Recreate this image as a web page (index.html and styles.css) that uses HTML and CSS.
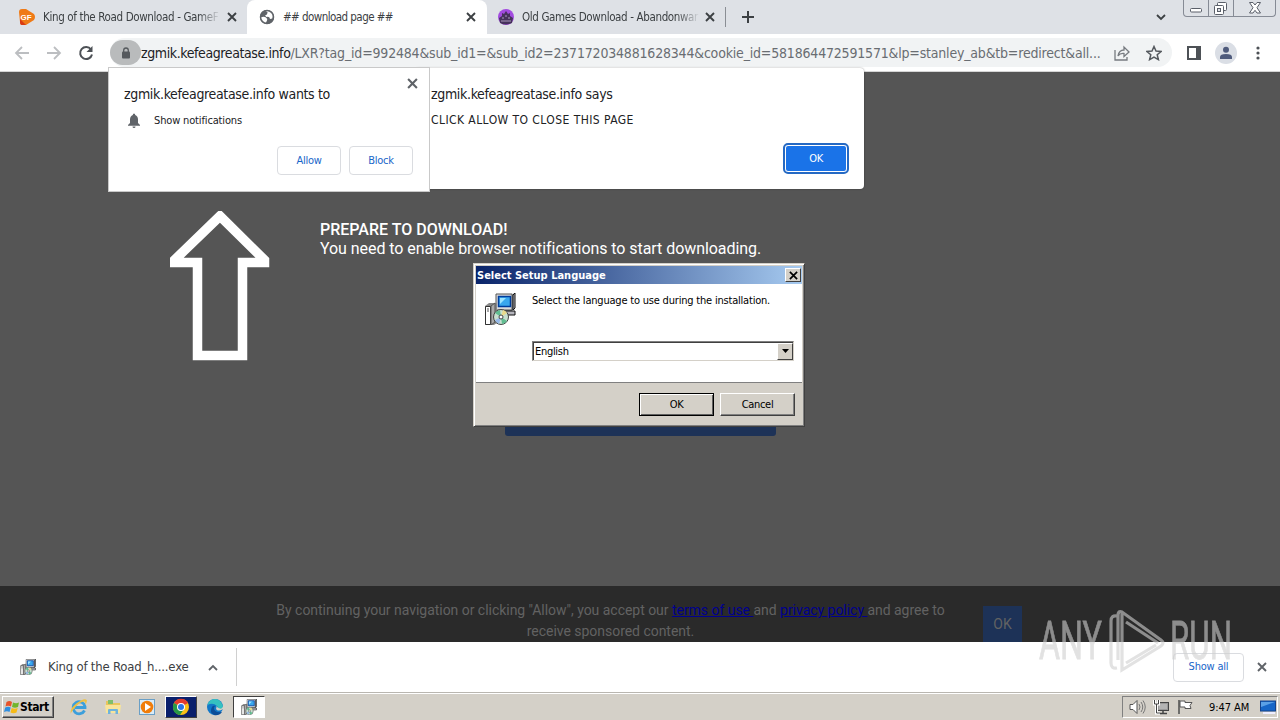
FILE: index.html
```
<!DOCTYPE html>
<html lang="en">
<head>
    <meta charset="UTF-8">
    <meta name="viewport" content="width=device-width, initial-scale=1.0">
    <title>## download page ##</title>
    <link rel="stylesheet" href="styles.css">
</head>
<body>

    <!-- shared icons -->
    <svg class="sprite">
        <symbol id="icon-x" viewBox="0 0 10 10">
            <path d="M1 1L9 9M9 1L1 9" stroke="currentColor" stroke-width="1.9" fill="none"/>
        </symbol>
        <symbol id="icon-setup" viewBox="0 0 32 32">
            <path d="M12 1h16l3-1v16l-3 2H12z" fill="#9aa0a8"/>
            <path d="M12 1h16v16H12z" fill="#dcdcdc" stroke="#555" stroke-width="1"/>
            <path d="M14.500 3.500h12v10h-12z" fill="#39a7ee" stroke="#003c9c" stroke-width="1.500"/>
            <path d="M16 5h6l-6 6z" fill="#9be4ff"/>
            <path d="M29 2l2-2v15l-2 2zM20 18h11v4H18z" fill="#b5b5bd" stroke="#111" stroke-width="1"/>
            <path d="M1 13l4-3h8v20l-3 2H1z" fill="#888"/>
            <path d="M1.500 13.500h5v18h-5z" fill="#fff" stroke="#333"/>
            <path d="M7 13l4-3v19l-4 3z" fill="#aaa" stroke="#555"/>
            <path d="M3 16h2M3 18h2" stroke="#555"/>
            <circle cx="17" cy="24" r="7.500" fill="#c7dfcf" stroke="#444"/>
            <path d="M17 24l-6-4a7 7 0 0 1 5-3zM17 24l6 4a7 7 0 0 1-5 3z" fill="#60bd91"/>
            <path d="M17 24l2-7a7 7 0 0 1 4 3z" fill="#e9da8b"/>
            <path d="M17 24l-6 3a7 7 0 0 0 4 4z" fill="#95b8e8"/>
            <circle cx="17" cy="24" r="2" fill="#fff" stroke="#444"/>
        </symbol>
    </svg>

    <div class="tab-strip">
        <div class="tab first">
            <svg class="favicon" viewBox="0 0 16 16">
                <path d="M3 0h4l8 5q2 3 0 6l-8 5H3Q1 16 1 13L0 3Q0 0 3 0z" fill="#ef7a16"/>
                <path d="M1 10l6 6H3Q1 16 1 13z" fill="#d93a14"/>
                <text x="1.500" y="11" class="favicon-text">GF</text>
            </svg>
            <span class="tab-title faded">King of the Road Download - GameF</span>
            <svg class="tab-close"><use href="#icon-x"/></svg>
        </div>
        <div class="tab active">
            <svg class="favicon" viewBox="0 0 16 16">
                <circle cx="8" cy="8" r="7" fill="#5f6368"/>
                <path d="M1.500 8.500q3.500-1.500 5.500 0t1 3l-1.500 3Q2 13 1.500 8.500zM6.500 2.500Q9 2 8.500 4T6 6.500l1.500 1.500q3-1 3.500 2l2.500-.5q1.500-5-2.500-7.500-2-1-4.500.5z" fill="#fff"/>
                <circle cx="8" cy="8" r="6.500" fill="none" stroke="#5f6368" stroke-width="1.500"/>
            </svg>
            <span class="tab-title">## download page ##</span>
            <svg class="tab-close"><use href="#icon-x"/></svg>
        </div>
        <div class="tab third">
            <svg class="favicon" viewBox="0 0 16 16">
                <circle cx="8" cy="8" r="8" fill="#a24be0"/>
                <path d="M1 9l3-2V4l2 1 2-3 2 3 2-1v3l3 2-1 5q-6 3-12 0z" fill="#46315c"/>
                <path d="M4 9h2M7 7h2M10 9h2M3 12h10" stroke="#a99abb"/>
            </svg>
            <span class="tab-title faded">Old Games Download - Abandonwar</span>
            <svg class="tab-close"><use href="#icon-x"/></svg>
        </div>
        <div class="tab-separator"></div>
        <svg class="new-tab" viewBox="0 0 12 12"><path d="M6 0v12M0 6h12" stroke="#3c4043" stroke-width="2"/></svg>
        <svg class="tab-search" viewBox="0 0 10 7"><path d="M1 1l4 4 4-4" fill="none" stroke="#3c4043" stroke-width="1.800"/></svg>
        <div class="window-buttons">
            <svg class="minimize" viewBox="0 0 24 16"><rect x="6.500" y="8.500" width="11" height="3.500" rx="1" fill="#fff" stroke="#5a5f69"/></svg>
            <svg class="restore" viewBox="0 0 24 16">
                <rect x="8.500" y="2.500" width="9" height="8" rx="1" fill="#fff" stroke="#5a5f69"/>
                <rect x="5.500" y="5.500" width="9" height="9" rx="1" fill="#fff" stroke="#5a5f69"/>
                <rect x="8.500" y="8.500" width="3" height="3" fill="#dee1e6" stroke="#5a5f69"/>
            </svg>
            <svg class="close" viewBox="0 0 41 16"><path d="M15.500 2.500h3.500l2 2.500 2-2.500h3.500l-3.500 5.200 3.500 5.300h-3.500l-2-2.700-2 2.700h-3.500l3.500-5.300z" fill="#fff" stroke="#5a5f69"/></svg>
        </div>
    </div>

    <div class="toolbar">
        <svg class="nav" viewBox="0 0 16 16"><path d="M15 8H2M8 2L2 8l6 6" fill="none" stroke="#bcbec1" stroke-width="1.800"/></svg>
        <svg class="nav" viewBox="0 0 16 16"><path d="M1 8h13M8 2l6 6-6 6" fill="none" stroke="#bcbec1" stroke-width="1.800"/></svg>
        <svg class="nav" viewBox="0 0 16 16">
            <path d="M13 4.500A6 6 0 1 0 14 9.500" fill="none" stroke="#4d5156" stroke-width="2"/>
            <path d="M14.500 1v6h-6z" fill="#4d5156"/>
        </svg>
        <div class="omnibox">
            <div class="lock">
                <svg viewBox="0 0 10 12">
                    <rect x="1" y="4.500" width="8" height="7" rx="1" fill="#55595d"/>
                    <path d="M2.700 5V3.300a2.300 2.300 0 0 1 4.600 0V5" fill="none" stroke="#55595d" stroke-width="1.300"/>
                </svg>
            </div>
            <span class="url"><b>zgmik.kefeagreatase.info</b>/LXR?tag_id=992484&amp;sub_id1=&amp;sub_id2=237172034881628344&amp;cookie_id=581864472591571&amp;lp=stanley_ab&amp;tb=redirect&amp;all...</span>
            <svg class="share" viewBox="0 0 16 16">
                <path d="M1 5v10h12v-3" fill="none" stroke="#777b80" stroke-width="1.300"/>
                <path d="M4 11q1-6 6-6V2l5 5-5 4.500V8.500Q6 8 4 11z" fill="none" stroke="#777b80" stroke-width="1.300"/>
            </svg>
            <svg class="star" viewBox="0 0 16 16"><path d="M8 1.500l2 4.500 5 .5-3.800 3.200 1.200 4.900L8 12l-4.400 2.600 1.200-4.900L1 6.500 6 6z" fill="none" stroke="#55595e" stroke-width="1.500"/></svg>
        </div>
        <svg class="side-panel" viewBox="0 0 14 14"><rect x="1" y="1" width="12" height="12" fill="#fff" stroke="#4d5156" stroke-width="2"/><path d="M9 1h4v12H9z" fill="#4d5156"/></svg>
        <svg class="profile" viewBox="0 0 22 22">
            <circle cx="11" cy="11" r="11" fill="#dadee5"/>
            <circle cx="11" cy="7.800" r="3" fill="#4f5b7c"/>
            <path d="M5 17v-2q0-3 6-3t6 3v2z" fill="#4f5b7c"/>
        </svg>
        <svg class="menu" viewBox="0 0 4 14"><circle cx="2" cy="2" r="1.600"/><circle cx="2" cy="7" r="1.600"/><circle cx="2" cy="12" r="1.600"/></svg>
    </div>

    <div class="page">
        <svg class="arrow" viewBox="0 0 100 150">
            <path d="M50 5L4.500 49v2.500H27.500V144.500H72.500V51.500H94.500V49L50 5z" fill="none" stroke="#fff" stroke-width="9.500"/>
        </svg>
        <div class="message">
            <h1>PREPARE TO DOWNLOAD!</h1>
            <p>You need to enable browser notifications to start downloading.</p>
            <div class="download-button"></div>
        </div>
        <div class="consent">
            <p>By continuing your navigation or clicking "Allow", you accept our <a>terms of use </a>and <a>privacy policy </a>and agree to<br>receive sponsored content.</p>
            <div class="consent-ok">OK</div>
        </div>
    </div>

    <div class="download-shelf">
        <svg class="file-icon"><use href="#icon-setup"/></svg>
        <span class="file-name">King of the Road_h....exe</span>
        <svg class="chevron" viewBox="0 0 10 7"><path d="M1 6l4-4 4 4" fill="none" stroke="#5f6368" stroke-width="1.800"/></svg>
        <div class="shelf-separator"></div>
        <div class="show-all">Show all</div>
        <svg class="shelf-close"><use href="#icon-x"/></svg>
    </div>

    <div class="taskbar">
        <div class="start">
            <svg viewBox="0 0 16 16">
                <path d="M2.500 3q3-2 5.500 0L7 7.500Q4 6 1.500 7.500z" fill="#e8542a"/>
                <path d="M9 3.500q3 1.500 6 0L14 8q-3 1.500-6 0z" fill="#71b52b"/>
                <path d="M1.200 8.500q3-1.500 5.500 0L5.500 13Q3 11.500 0 13z" fill="#2f8fe0"/>
                <path d="M7.700 9q3 1.500 6 0l-1.200 4.500q-3 1.500-6 0z" fill="#f6bb17"/>
            </svg>
            <span>Start</span>
        </div>
        <div class="task">
            <svg viewBox="0 0 18 18">
                <path d="M14.500 12.500A6 6 0 1 1 15 8.500v1H5" fill="none" stroke="#3c9fdb" stroke-width="2.800"/>
                <path d="M1 16Q-1 11 7 5T17 2.500q0 2-2 4 1-3-1-3-4 0-9 6T1 16z" fill="#edc043"/>
            </svg>
        </div>
        <div class="task">
            <svg viewBox="0 0 18 18">
                <path d="M2 3h5l1 2h8v10H2z" fill="#e9c55c"/>
                <path d="M4 2h5v4H4z" fill="#7fbf6b"/>
                <path d="M1 7h16l-1 8H2z" fill="#f8e49b"/>
                <path d="M4 16v-4q0-1 1-1h8q1 0 1 1v4h-2.500v-3h-5v3z" fill="#6fb3dc"/>
            </svg>
        </div>
        <div class="task">
            <svg viewBox="0 0 18 18">
                <rect x="1.500" y="1.500" width="15" height="15" fill="#d9ecf8" stroke="#6a9fc6"/>
                <circle cx="9" cy="9" r="6.300" fill="#f07d0a"/>
                <path d="M7 5l6 4-6 4z" fill="#fff"/>
            </svg>
        </div>
        <div class="task chrome">
            <svg viewBox="0 0 18 18">
                <circle cx="9" cy="9" r="8" fill="#fbc116"/>
                <path d="M9 9L2 5a8 8 0 0 1 14 0z" fill="#e33b2e"/>
                <path d="M9 9L2 5a8 8 0 0 0 6 12l4-6z" fill="#279847"/>
                <circle cx="9" cy="9" r="4" fill="#fff"/>
                <circle cx="9" cy="9" r="3" fill="#2a75e6"/>
            </svg>
        </div>
        <div class="task">
            <svg viewBox="0 0 18 18">
                <circle cx="9" cy="9" r="8" fill="#1277c8"/>
                <path d="M1.500 7Q3 1 9 1t8 8q-1 4-6 3 2-2 0-4-4-4-9.500-1z" fill="#35c1c0"/>
                <path d="M8 10q0 5 8 4-3 4-8 3-5-3-2-8 1-2 4-1-2 0-2 2z" fill="#0b4d98"/>
                <path d="M10 8q1 1 0 3 2 3 7 0 .5-2 .3-4Q16 14 10 8z" fill="#d4d0c8"/>
            </svg>
        </div>
        <div class="task pressed">
            <svg><use href="#icon-setup"/></svg>
        </div>
        <div class="tray">
            <svg viewBox="0 0 18 16">
                <path d="M2 5.500h3l4-4v13l-4-4H2z" fill="#fff" stroke="#555"/>
                <path d="M11 5q2 3 0 6M13 3q3.500 5 0 10M15 1.500q4.500 6.500 0 13" fill="none" stroke="#777"/>
            </svg>
            <svg viewBox="0 0 18 16">
                <rect x="5.500" y="3.500" width="11" height="8" fill="#999" stroke="#444"/>
                <path d="M7 5h8v5H7z" fill="#b4b4b4"/>
                <path d="M8 14.500h7M11 12v2" stroke="#444" stroke-width="1.500"/>
                <path d="M2.500 1v4h4V1M4.500 5v9H8" fill="none" stroke="#fff" stroke-width="3"/>
                <path d="M2.500 1v4h4V1M4.500 5v9H8" fill="none" stroke="#444"/>
            </svg>
            <svg viewBox="0 0 18 16">
                <path d="M4 2h5v1.500h7l-2 3 1 3H9V8H4z" fill="#fff" stroke="#555"/>
                <path d="M3 1v14" stroke="#555" stroke-width="1.600"/>
            </svg>
            <span class="clock">9:47 AM</span>
            <svg class="desktop" viewBox="0 0 18 16">
                <rect x="1.500" y="2" width="15" height="10" fill="#1766c7" stroke="#15428b"/>
                <path d="M2 3h14L2 8z" fill="#5ba0e6"/>
                <path d="M4 14h12" stroke="#eef" stroke-width="2"/>
            </svg>
        </div>
    </div>

    <!-- javascript alert, partly covered by the permission prompt -->
    <div class="alert">
        <div class="alert-title">zgmik.kefeagreatase.info says</div>
        <div class="alert-text">CLICK ALLOW TO CLOSE THIS PAGE</div>
        <div class="alert-ok">OK</div>
    </div>

    <div class="permission">
        <svg class="permission-close"><use href="#icon-x"/></svg>
        <div class="permission-title">zgmik.kefeagreatase.info wants to</div>
        <div class="permission-row">
            <svg viewBox="0 0 12 15">
                <path d="M6 .5q1.200 0 1.200 1.500Q10 3 10 6.500V10l2 2v.8H0V12l2-2V6.500Q2 3 4.800 2 4.800.5 6 .5z" fill="#5f6368"/>
                <path d="M4.500 13.500h3q0 1.500-1.500 1.500t-1.500-1.500z" fill="#5f6368"/>
            </svg>
            <span>Show notifications</span>
        </div>
        <div class="permission-buttons">
            <div>Allow</div>
            <div>Block</div>
        </div>
    </div>

    <div class="setup">
        <div class="setup-title">
            <span>Select Setup Language</span>
            <div class="setup-close"><svg><use href="#icon-x"/></svg></div>
        </div>
        <div class="setup-body">
            <svg class="setup-icon"><use href="#icon-setup"/></svg>
            <div class="setup-form">
                <div class="setup-label">Select the language to use during the installation.</div>
                <div class="combo">
                    <span>English</span>
                    <div class="combo-button"><svg viewBox="0 0 7 4"><path d="M0 0h7L3.500 4z"/></svg></div>
                </div>
            </div>
        </div>
        <div class="setup-footer">
            <div class="win-button default">OK</div>
            <div class="win-button">Cancel</div>
        </div>
    </div>

    <svg class="watermark" viewBox="0 0 200 70">
        <text x="3" y="51" textLength="63" lengthAdjust="spacingAndGlyphs">ANY</text>
        <path d="M81 8q-6-1-6 5v42q0 6 6 5M86 4v58l39-24q4-3 0-6L86 4q-4-2-4 4v44M90 14l32 21M90 55l30-18"/>
        <text x="134" y="51" textLength="62" lengthAdjust="spacingAndGlyphs">RUN</text>
    </svg>

</body>
</html>
```
FILE: styles.css
```
* {
    box-sizing: border-box;
}

body {
    position: relative;
    display: flex;
    flex-direction: column;
    width: 1280px;
    height: 720px;
    margin: 0;
    overflow: hidden;
    font-family: "DejaVu Sans Condensed", "DejaVu Sans", sans-serif;
    font-stretch: condensed;
    font-size: 11px;
    color: #202124;
    white-space: nowrap;
}

svg {
    display: block;
    flex: none;
}

.sprite {
    position: absolute;
    width: 0;
    height: 0;
}

/* Tabs */
.tab-strip {
    display: flex;
    align-items: center;
    flex: none;
    height: 34px;
    background-color: #dee1e6;
}

.tab {
    display: flex;
    align-items: center;
    height: 34px;
    width: 240px;
    padding: 0 11px 0 12px;
    color: #3c4043;
}

.tab.first {
    width: 247px;
    padding: 0 10px 0 19px;
}

.tab.active {
    background-color: #fff;
    border-radius: 8px 8px 0 0;
}

.tab.third {
    width: 239px;
    padding-left: 11px;
}

.favicon {
    width: 16px;
    height: 16px;
    margin-right: 8px;
}

.favicon-text {
    font: bold 8px "Liberation Sans", sans-serif;
    fill: #fff;
}

.tab-title {
    width: 177px;
    overflow: hidden;
    font-size: 11.5px;
    letter-spacing: -0.36px;
}

.tab.active .tab-title {
    letter-spacing: -0.55px;
}

.tab-title.faded {
    -webkit-mask-image: linear-gradient(to right, #000 155px, transparent 178px);
    mask-image: linear-gradient(to right, #000 155px, transparent 178px);
}

.tab-close {
    width: 10px;
    height: 10px;
    margin-left: auto;
    color: #3c4043;
}

.tab-separator {
    width: 1px;
    height: 20px;
    margin-left: -1px;
    background-color: #8a8e94;
}

.new-tab {
    width: 12px;
    height: 12px;
    margin-left: 16px;
}

.tab-search {
    width: 10px;
    height: 7px;
    margin-left: auto;
    margin-right: 17px;
}

.window-buttons {
    display: flex;
    align-self: flex-start;
    height: 17px;
    margin-right: 4px;
    border: 1px solid #868b95;
    border-top: none;
    border-radius: 0 0 4px 4px;
}

.window-buttons svg {
    width: 25px;
    height: 16px;
    border-right: 1px solid #868b95;
}

.window-buttons .close {
    width: 41px;
    border-right: none;
}

/* Toolbar */
.toolbar {
    display: flex;
    align-items: center;
    flex: none;
    height: 38px;
    padding: 0 20px 0 14px;
    background-color: #fff;
    border-bottom: 1px solid #d5d5d5;
}

.nav {
    width: 16px;
    height: 16px;
    margin-right: 16px;
}

.omnibox {
    display: flex;
    align-items: center;
    width: 1062px;
    height: 29px;
    background-color: #f1f3f4;
    border-radius: 15px;
}

.lock {
    display: flex;
    align-items: center;
    justify-content: center;
    width: 31px;
    height: 25px;
    border-radius: 13px;
    background-color: #b9bbbc;
}

.lock svg {
    width: 10px;
    height: 12px;
}

.url {
    width: 973px;
    font-size: 14px;
    letter-spacing: -0.19px;
    color: #696d72;
}

.url b {
    font-weight: normal;
    letter-spacing: -0.4px;
    color: #202124;
}

.share,
.star {
    width: 16px;
    height: 16px;
    margin-right: 16px;
}

.star {
    margin: 0;
}

.side-panel {
    width: 14px;
    height: 14px;
    margin-left: 15px;
}

.profile {
    width: 22px;
    height: 22px;
    margin-left: 14px;
}

.menu {
    width: 4px;
    height: 14px;
    margin-left: auto;
    fill: #4d5156;
}

/* Page content */
.page {
    position: relative;
    display: flex;
    flex: none;
    height: 570px;
    background-color: #555;
    font-family: Roboto, sans-serif;
    font-stretch: normal;
    color: #fff;
}

.arrow {
    width: 100px;
    height: 150px;
    margin: 139px 50px 0 170px;
}

.message {
    padding-top: 148px;
    font-size: 16px;
    line-height: 19px;
}

.message h1 {
    margin: 0;
    font-size: 16px;
    font-weight: 500;
}

.message p {
    margin: 0;
    letter-spacing: -0.06px;
}

.download-button {
    width: 271px;
    height: 46px;
    margin: 132px 0 0 185px;
    border-radius: 3px;
    background-color: #1d3257;
}

.consent {
    position: absolute;
    left: 0;
    bottom: 0;
    display: flex;
    width: 100%;
    height: 56px;
    padding: 14px 0 0 276px;
    overflow: hidden;
    background-color: #2a2a2a;
    color: #626262;
    font-size: 14px;
    letter-spacing: -0.03px;
    line-height: 21px;
    text-align: center;
}

.consent p {
    width: 669px;
    margin: 0;
}

.consent a {
    color: #00008f;
    text-decoration: underline;
}

.consent-ok {
    width: 39px;
    height: 36px;
    margin: 6px 0 0 38px;
    line-height: 36px;
    background-color: #1d3257;
}

/* Downloads */
.download-shelf {
    display: flex;
    align-items: center;
    flex: none;
    height: 50px;
    padding: 0 13px 0 20px;
    background-color: #fff;
}

.file-icon {
    width: 16px;
    height: 16px;
    margin-right: 12px;
}

.file-name {
    width: 160px;
    padding-bottom: 1px;
    font-size: 13px;
    letter-spacing: -0.2px;
    color: #3c4043;
}

.chevron {
    width: 10px;
    height: 7px;
}

.shelf-separator {
    width: 1px;
    height: 38px;
    margin-left: 18px;
    background-color: #d0d0d0;
}

.show-all {
    width: 71px;
    height: 29px;
    margin-left: auto;
    border: 1px solid #dadce0;
    border-radius: 4px;
    color: #1a66c9;
    letter-spacing: -0.2px;
    line-height: 25px;
    text-align: center;
}

.shelf-close {
    width: 10px;
    height: 10px;
    margin-left: 13px;
    color: #5f6368;
}

/* Taskbar */
.taskbar {
    display: flex;
    align-items: center;
    flex: none;
    height: 28px;
    padding: 1px 2px 0 2px;
    background-color: #d4d0c8;
    border-top: 1px solid #b9b6b0;
    box-shadow: inset 0 1px #fff;
    color: #000;
}

.start {
    display: flex;
    align-items: center;
    width: 52px;
    height: 22px;
    margin-right: 9px;
    padding-left: 1px;
    border: 1px solid;
    border-color: #fff #404040 #404040 #fff;
    box-shadow: inset -1px -1px #808080;
    font-size: 12px;
    font-weight: bold;
    letter-spacing: -0.4px;
}

.start svg {
    width: 16px;
    height: 16px;
}

.task {
    display: flex;
    align-items: center;
    justify-content: center;
    width: 32px;
    height: 22px;
    margin-right: 2px;
}

.task svg {
    width: 18px;
    height: 18px;
}

.task.chrome {
    background-color: #0a1f6b;
    border: 1px solid;
    border-color: #fff #404040 #404040 #fff;
}

.task.pressed {
    background-color: #fff;
    border: 1px solid;
    border-color: #404040 #fff #fff #404040;
}

.task.pressed svg {
    width: 16px;
    height: 16px;
}

.tray {
    display: flex;
    align-items: center;
    width: 156px;
    height: 22px;
    margin-left: auto;
    padding-left: 5px;
    border: 1px solid;
    border-color: #808080 #fff #fff #808080;
}

.tray svg {
    width: 18px;
    height: 16px;
    margin-right: 6px;
}

.clock {
    width: 50px;
    margin-left: 9px;
    letter-spacing: -0.05px;
}

.tray .desktop {
    margin: 0;
}

/* Alert */
.alert {
    position: absolute;
    top: 68px;
    left: 415px;
    width: 449px;
    height: 121px;
    padding: 17px 16px 0;
    background-color: #fff;
    border-radius: 4px;
    box-shadow: 0 0 2px rgba(0, 0, 0, 0.4);
}

.alert-title,
.permission-title {
    font-size: 14px;
    letter-spacing: -0.34px;
    line-height: 18px;
}

.alert-text {
    margin-top: 9px;
    font-size: 12px;
    letter-spacing: 0.43px;
    line-height: 16px;
}

.alert-ok {
    width: 62px;
    height: 27px;
    margin: 17px 1px 0 auto;
    border: 1px solid #fff;
    border-radius: 3px;
    outline: 2px solid #2569c3;
    background-color: #1a73e8;
    color: #fff;
    letter-spacing: -0.3px;
    line-height: 25px;
    text-align: center;
}

/* Notification prompt */
.permission {
    position: absolute;
    top: 67px;
    left: 108px;
    width: 322px;
    height: 125px;
    padding: 17px 16px 0 15px;
    background-color: #fff;
    border: 1px solid #c9c9c9;
}

.permission-close {
    position: absolute;
    top: 10px;
    right: 11px;
    width: 11px;
    height: 11px;
    color: #5f6368;
}

.permission-row {
    display: flex;
    align-items: center;
    height: 16px;
    margin-top: 9px;
    padding-left: 4px;
    letter-spacing: -0.15px;
}

.permission-row svg {
    width: 12px;
    height: 15px;
    margin-right: 14px;
}

.permission-buttons {
    display: flex;
    justify-content: flex-end;
    gap: 8px;
    margin-top: 18px;
}

.permission-buttons div {
    width: 64px;
    height: 29px;
    border: 1px solid #dadce0;
    border-radius: 4px;
    color: #1a66c9;
    letter-spacing: -0.3px;
    line-height: 27px;
    text-align: center;
}

/* Setup window */
.setup {
    position: absolute;
    top: 263px;
    left: 473px;
    width: 332px;
    height: 164px;
    padding: 2px;
    background-color: #d4d0c8;
    border: 1px solid;
    border-color: #d4d0c8 #404040 #404040 #d4d0c8;
    box-shadow: inset 1px 1px #fff, inset -1px -1px #808080;
    color: #000;
}

.setup-title {
    display: flex;
    align-items: center;
    justify-content: space-between;
    height: 18px;
    padding: 0 1px 0 1px;
    background: linear-gradient(to right, #0a246a, #a6caf0);
    color: #fff;
    font-weight: bold;
}

.setup-close {
    display: flex;
    align-items: center;
    justify-content: center;
    width: 16px;
    height: 14px;
    border: 1px solid;
    border-color: #fff #404040 #404040 #fff;
    background-color: #d4d0c8;
    color: #000;
}

.setup-close svg {
    width: 9px;
    height: 9px;
}

.setup-body {
    display: flex;
    height: 99px;
    padding: 9px 8px 0 8px;
    background-color: #fff;
    border-bottom: 1px solid #808080;
}

.setup-icon {
    width: 32px;
    height: 32px;
}

.setup-form {
    width: 262px;
    margin-left: 16px;
}

.setup-label {
    padding-top: 1px;
    letter-spacing: -0.2px;
    line-height: 14px;
}

.combo {
    display: flex;
    align-items: center;
    justify-content: space-between;
    height: 20px;
    margin-top: 33px;
    padding-left: 2px;
    border: 1px solid;
    border-color: #808080 #d4d0c8 #d4d0c8 #808080;
    box-shadow: inset 1px 1px #404040;
    letter-spacing: -0.3px;
}

.combo span {
    padding-top: 1px;
}

.combo-button {
    display: flex;
    align-items: center;
    justify-content: center;
    width: 16px;
    height: 17px;
    border: 1px solid;
    border-color: #fff #404040 #404040 #fff;
    background-color: #d4d0c8;
}

.combo-button svg {
    width: 7px;
    height: 4px;
}

.setup-footer {
    display: flex;
    justify-content: flex-end;
    gap: 6px;
    padding: 10px 7px 0 0;
}

.win-button {
    width: 75px;
    height: 23px;
    border: 1px solid;
    border-color: #fff #404040 #404040 #fff;
    box-shadow: inset -1px -1px #808080;
    letter-spacing: -0.3px;
    line-height: 21px;
    text-align: center;
}

.win-button.default {
    border-color: #000;
    box-shadow: inset 1px 1px #fff, inset -1px -1px #606060;
    line-height: 22px;
}

/* Watermark */
.watermark {
    position: absolute;
    top: 608px;
    left: 1036px;
    width: 200px;
    height: 70px;
    opacity: 0.6;
    fill: none;
    stroke: #cfcfcf;
    stroke-width: 3.2;
}

.watermark text {
    font: 400 53px Roboto, sans-serif;
    fill: #cfcfcf;
    stroke-width: 0.8;
}
```
